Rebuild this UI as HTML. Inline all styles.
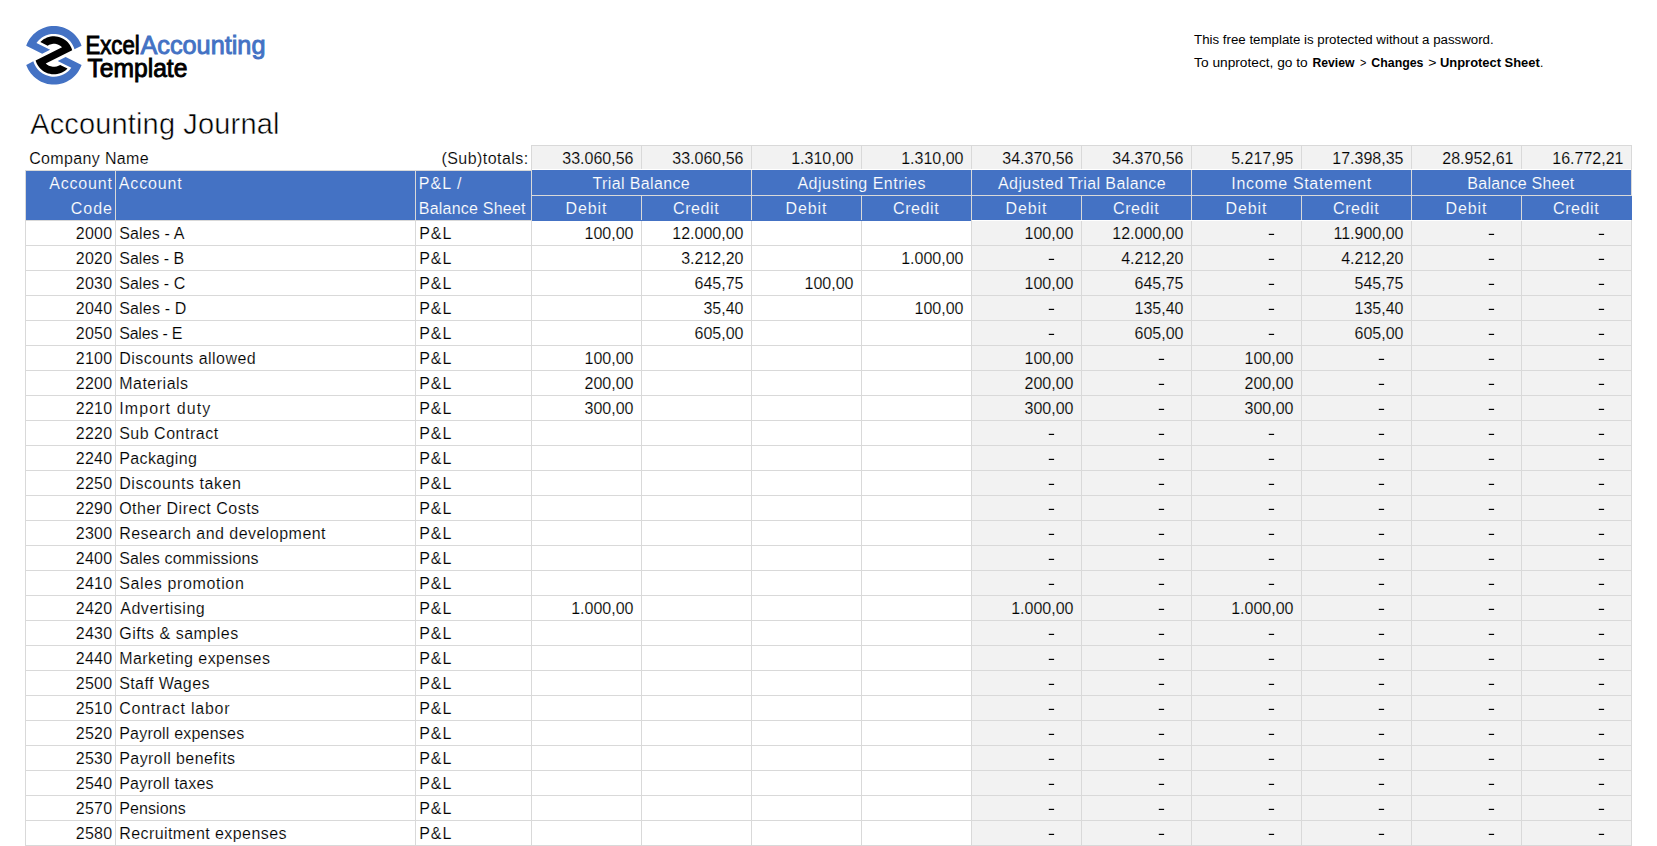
<!DOCTYPE html>
<html><head><meta charset="utf-8"><title>Accounting Journal</title>
<style>
html,body{margin:0;padding:0;background:#fff;}
body{width:1657px;height:846px;overflow:hidden;position:relative;font-family:"Liberation Sans",sans-serif;}
svg{position:absolute;left:0;top:0;display:block;}
</style></head><body>
<svg width="1657" height="846" viewBox="0 0 1657 846" shape-rendering="crispEdges">
<rect x="971" y="220" width="661" height="626" fill="#F2F2F2"/>
<rect x="531" y="145" width="1101" height="25" fill="#F2F2F2"/>
<rect x="25" y="220" width="1607" height="1" fill="#D9D9D9"/>
<rect x="25" y="245" width="1607" height="1" fill="#D9D9D9"/>
<rect x="25" y="270" width="1607" height="1" fill="#D9D9D9"/>
<rect x="25" y="295" width="1607" height="1" fill="#D9D9D9"/>
<rect x="25" y="320" width="1607" height="1" fill="#D9D9D9"/>
<rect x="25" y="345" width="1607" height="1" fill="#D9D9D9"/>
<rect x="25" y="370" width="1607" height="1" fill="#D9D9D9"/>
<rect x="25" y="395" width="1607" height="1" fill="#D9D9D9"/>
<rect x="25" y="420" width="1607" height="1" fill="#D9D9D9"/>
<rect x="25" y="445" width="1607" height="1" fill="#D9D9D9"/>
<rect x="25" y="470" width="1607" height="1" fill="#D9D9D9"/>
<rect x="25" y="495" width="1607" height="1" fill="#D9D9D9"/>
<rect x="25" y="520" width="1607" height="1" fill="#D9D9D9"/>
<rect x="25" y="545" width="1607" height="1" fill="#D9D9D9"/>
<rect x="25" y="570" width="1607" height="1" fill="#D9D9D9"/>
<rect x="25" y="595" width="1607" height="1" fill="#D9D9D9"/>
<rect x="25" y="620" width="1607" height="1" fill="#D9D9D9"/>
<rect x="25" y="645" width="1607" height="1" fill="#D9D9D9"/>
<rect x="25" y="670" width="1607" height="1" fill="#D9D9D9"/>
<rect x="25" y="695" width="1607" height="1" fill="#D9D9D9"/>
<rect x="25" y="720" width="1607" height="1" fill="#D9D9D9"/>
<rect x="25" y="745" width="1607" height="1" fill="#D9D9D9"/>
<rect x="25" y="770" width="1607" height="1" fill="#D9D9D9"/>
<rect x="25" y="795" width="1607" height="1" fill="#D9D9D9"/>
<rect x="25" y="820" width="1607" height="1" fill="#D9D9D9"/>
<rect x="25" y="845" width="1607" height="1" fill="#D9D9D9"/>
<rect x="25" y="220" width="1" height="626" fill="#D9D9D9"/>
<rect x="115" y="220" width="1" height="626" fill="#D9D9D9"/>
<rect x="415" y="220" width="1" height="626" fill="#D9D9D9"/>
<rect x="531" y="220" width="1" height="626" fill="#D9D9D9"/>
<rect x="641" y="220" width="1" height="626" fill="#D9D9D9"/>
<rect x="751" y="220" width="1" height="626" fill="#D9D9D9"/>
<rect x="861" y="220" width="1" height="626" fill="#D9D9D9"/>
<rect x="971" y="220" width="1" height="626" fill="#D9D9D9"/>
<rect x="1081" y="220" width="1" height="626" fill="#D9D9D9"/>
<rect x="1191" y="220" width="1" height="626" fill="#D9D9D9"/>
<rect x="1301" y="220" width="1" height="626" fill="#D9D9D9"/>
<rect x="1411" y="220" width="1" height="626" fill="#D9D9D9"/>
<rect x="1521" y="220" width="1" height="626" fill="#D9D9D9"/>
<rect x="1631" y="220" width="1" height="626" fill="#D9D9D9"/>
<rect x="531" y="145" width="1101" height="1" fill="#D9D9D9"/>
<rect x="531" y="145" width="1" height="25" fill="#D9D9D9"/>
<rect x="641" y="145" width="1" height="25" fill="#D9D9D9"/>
<rect x="751" y="145" width="1" height="25" fill="#D9D9D9"/>
<rect x="861" y="145" width="1" height="25" fill="#D9D9D9"/>
<rect x="971" y="145" width="1" height="25" fill="#D9D9D9"/>
<rect x="1081" y="145" width="1" height="25" fill="#D9D9D9"/>
<rect x="1191" y="145" width="1" height="25" fill="#D9D9D9"/>
<rect x="1301" y="145" width="1" height="25" fill="#D9D9D9"/>
<rect x="1411" y="145" width="1" height="25" fill="#D9D9D9"/>
<rect x="1521" y="145" width="1" height="25" fill="#D9D9D9"/>
<rect x="1631" y="145" width="1" height="25" fill="#D9D9D9"/>
<rect x="25" y="170" width="506" height="1" fill="#D9D9D9"/>
<rect x="25" y="171" width="506" height="49" fill="#4472C4"/>
<rect x="532" y="169" width="1099" height="1" fill="#FFFFFF"/>
<rect x="531" y="170" width="1101" height="50" fill="#4472C4"/>
<rect x="532" y="220" width="439" height="1" fill="#4472C4"/>
<rect x="972" y="220" width="659" height="1" fill="#FFFFFF"/>
<rect x="1631" y="220" width="1" height="1" fill="#D9D9D9"/>
<rect x="25" y="170" width="1" height="50" fill="#D9D9D9"/>
<rect x="115" y="170" width="1" height="50" fill="#D9D9D9"/>
<rect x="415" y="170" width="1" height="50" fill="#D9D9D9"/>
<rect x="531" y="170" width="1" height="50" fill="#D9D9D9"/>
<rect x="751" y="170" width="1" height="50" fill="#D9D9D9"/>
<rect x="971" y="170" width="1" height="50" fill="#D9D9D9"/>
<rect x="1191" y="170" width="1" height="50" fill="#D9D9D9"/>
<rect x="1411" y="170" width="1" height="50" fill="#D9D9D9"/>
<rect x="1631" y="170" width="1" height="25" fill="#D9D9D9"/>
<rect x="641" y="195" width="1" height="25" fill="#D9D9D9"/>
<rect x="861" y="195" width="1" height="25" fill="#D9D9D9"/>
<rect x="1081" y="195" width="1" height="25" fill="#D9D9D9"/>
<rect x="1301" y="195" width="1" height="25" fill="#D9D9D9"/>
<rect x="1521" y="195" width="1" height="25" fill="#D9D9D9"/>
<rect x="531" y="195" width="1100" height="1" fill="#D9D9D9"/>
<rect x="1631" y="195" width="1" height="1" fill="#D9D9D9"/>
<g shape-rendering="geometricPrecision"><rect x="1268.80" y="233.80" width="5.30" height="1.20" fill="#000"/>
<rect x="1488.80" y="233.80" width="5.30" height="1.20" fill="#000"/>
<rect x="1598.80" y="233.80" width="5.30" height="1.20" fill="#000"/>
<rect x="1048.80" y="258.80" width="5.30" height="1.20" fill="#000"/>
<rect x="1268.80" y="258.80" width="5.30" height="1.20" fill="#000"/>
<rect x="1488.80" y="258.80" width="5.30" height="1.20" fill="#000"/>
<rect x="1598.80" y="258.80" width="5.30" height="1.20" fill="#000"/>
<rect x="1268.80" y="283.80" width="5.30" height="1.20" fill="#000"/>
<rect x="1488.80" y="283.80" width="5.30" height="1.20" fill="#000"/>
<rect x="1598.80" y="283.80" width="5.30" height="1.20" fill="#000"/>
<rect x="1048.80" y="308.80" width="5.30" height="1.20" fill="#000"/>
<rect x="1268.80" y="308.80" width="5.30" height="1.20" fill="#000"/>
<rect x="1488.80" y="308.80" width="5.30" height="1.20" fill="#000"/>
<rect x="1598.80" y="308.80" width="5.30" height="1.20" fill="#000"/>
<rect x="1048.80" y="333.80" width="5.30" height="1.20" fill="#000"/>
<rect x="1268.80" y="333.80" width="5.30" height="1.20" fill="#000"/>
<rect x="1488.80" y="333.80" width="5.30" height="1.20" fill="#000"/>
<rect x="1598.80" y="333.80" width="5.30" height="1.20" fill="#000"/>
<rect x="1158.80" y="358.80" width="5.30" height="1.20" fill="#000"/>
<rect x="1378.80" y="358.80" width="5.30" height="1.20" fill="#000"/>
<rect x="1488.80" y="358.80" width="5.30" height="1.20" fill="#000"/>
<rect x="1598.80" y="358.80" width="5.30" height="1.20" fill="#000"/>
<rect x="1158.80" y="383.80" width="5.30" height="1.20" fill="#000"/>
<rect x="1378.80" y="383.80" width="5.30" height="1.20" fill="#000"/>
<rect x="1488.80" y="383.80" width="5.30" height="1.20" fill="#000"/>
<rect x="1598.80" y="383.80" width="5.30" height="1.20" fill="#000"/>
<rect x="1158.80" y="408.80" width="5.30" height="1.20" fill="#000"/>
<rect x="1378.80" y="408.80" width="5.30" height="1.20" fill="#000"/>
<rect x="1488.80" y="408.80" width="5.30" height="1.20" fill="#000"/>
<rect x="1598.80" y="408.80" width="5.30" height="1.20" fill="#000"/>
<rect x="1048.80" y="433.80" width="5.30" height="1.20" fill="#000"/>
<rect x="1158.80" y="433.80" width="5.30" height="1.20" fill="#000"/>
<rect x="1268.80" y="433.80" width="5.30" height="1.20" fill="#000"/>
<rect x="1378.80" y="433.80" width="5.30" height="1.20" fill="#000"/>
<rect x="1488.80" y="433.80" width="5.30" height="1.20" fill="#000"/>
<rect x="1598.80" y="433.80" width="5.30" height="1.20" fill="#000"/>
<rect x="1048.80" y="458.80" width="5.30" height="1.20" fill="#000"/>
<rect x="1158.80" y="458.80" width="5.30" height="1.20" fill="#000"/>
<rect x="1268.80" y="458.80" width="5.30" height="1.20" fill="#000"/>
<rect x="1378.80" y="458.80" width="5.30" height="1.20" fill="#000"/>
<rect x="1488.80" y="458.80" width="5.30" height="1.20" fill="#000"/>
<rect x="1598.80" y="458.80" width="5.30" height="1.20" fill="#000"/>
<rect x="1048.80" y="483.80" width="5.30" height="1.20" fill="#000"/>
<rect x="1158.80" y="483.80" width="5.30" height="1.20" fill="#000"/>
<rect x="1268.80" y="483.80" width="5.30" height="1.20" fill="#000"/>
<rect x="1378.80" y="483.80" width="5.30" height="1.20" fill="#000"/>
<rect x="1488.80" y="483.80" width="5.30" height="1.20" fill="#000"/>
<rect x="1598.80" y="483.80" width="5.30" height="1.20" fill="#000"/>
<rect x="1048.80" y="508.80" width="5.30" height="1.20" fill="#000"/>
<rect x="1158.80" y="508.80" width="5.30" height="1.20" fill="#000"/>
<rect x="1268.80" y="508.80" width="5.30" height="1.20" fill="#000"/>
<rect x="1378.80" y="508.80" width="5.30" height="1.20" fill="#000"/>
<rect x="1488.80" y="508.80" width="5.30" height="1.20" fill="#000"/>
<rect x="1598.80" y="508.80" width="5.30" height="1.20" fill="#000"/>
<rect x="1048.80" y="533.80" width="5.30" height="1.20" fill="#000"/>
<rect x="1158.80" y="533.80" width="5.30" height="1.20" fill="#000"/>
<rect x="1268.80" y="533.80" width="5.30" height="1.20" fill="#000"/>
<rect x="1378.80" y="533.80" width="5.30" height="1.20" fill="#000"/>
<rect x="1488.80" y="533.80" width="5.30" height="1.20" fill="#000"/>
<rect x="1598.80" y="533.80" width="5.30" height="1.20" fill="#000"/>
<rect x="1048.80" y="558.80" width="5.30" height="1.20" fill="#000"/>
<rect x="1158.80" y="558.80" width="5.30" height="1.20" fill="#000"/>
<rect x="1268.80" y="558.80" width="5.30" height="1.20" fill="#000"/>
<rect x="1378.80" y="558.80" width="5.30" height="1.20" fill="#000"/>
<rect x="1488.80" y="558.80" width="5.30" height="1.20" fill="#000"/>
<rect x="1598.80" y="558.80" width="5.30" height="1.20" fill="#000"/>
<rect x="1048.80" y="583.80" width="5.30" height="1.20" fill="#000"/>
<rect x="1158.80" y="583.80" width="5.30" height="1.20" fill="#000"/>
<rect x="1268.80" y="583.80" width="5.30" height="1.20" fill="#000"/>
<rect x="1378.80" y="583.80" width="5.30" height="1.20" fill="#000"/>
<rect x="1488.80" y="583.80" width="5.30" height="1.20" fill="#000"/>
<rect x="1598.80" y="583.80" width="5.30" height="1.20" fill="#000"/>
<rect x="1158.80" y="608.80" width="5.30" height="1.20" fill="#000"/>
<rect x="1378.80" y="608.80" width="5.30" height="1.20" fill="#000"/>
<rect x="1488.80" y="608.80" width="5.30" height="1.20" fill="#000"/>
<rect x="1598.80" y="608.80" width="5.30" height="1.20" fill="#000"/>
<rect x="1048.80" y="633.80" width="5.30" height="1.20" fill="#000"/>
<rect x="1158.80" y="633.80" width="5.30" height="1.20" fill="#000"/>
<rect x="1268.80" y="633.80" width="5.30" height="1.20" fill="#000"/>
<rect x="1378.80" y="633.80" width="5.30" height="1.20" fill="#000"/>
<rect x="1488.80" y="633.80" width="5.30" height="1.20" fill="#000"/>
<rect x="1598.80" y="633.80" width="5.30" height="1.20" fill="#000"/>
<rect x="1048.80" y="658.80" width="5.30" height="1.20" fill="#000"/>
<rect x="1158.80" y="658.80" width="5.30" height="1.20" fill="#000"/>
<rect x="1268.80" y="658.80" width="5.30" height="1.20" fill="#000"/>
<rect x="1378.80" y="658.80" width="5.30" height="1.20" fill="#000"/>
<rect x="1488.80" y="658.80" width="5.30" height="1.20" fill="#000"/>
<rect x="1598.80" y="658.80" width="5.30" height="1.20" fill="#000"/>
<rect x="1048.80" y="683.80" width="5.30" height="1.20" fill="#000"/>
<rect x="1158.80" y="683.80" width="5.30" height="1.20" fill="#000"/>
<rect x="1268.80" y="683.80" width="5.30" height="1.20" fill="#000"/>
<rect x="1378.80" y="683.80" width="5.30" height="1.20" fill="#000"/>
<rect x="1488.80" y="683.80" width="5.30" height="1.20" fill="#000"/>
<rect x="1598.80" y="683.80" width="5.30" height="1.20" fill="#000"/>
<rect x="1048.80" y="708.80" width="5.30" height="1.20" fill="#000"/>
<rect x="1158.80" y="708.80" width="5.30" height="1.20" fill="#000"/>
<rect x="1268.80" y="708.80" width="5.30" height="1.20" fill="#000"/>
<rect x="1378.80" y="708.80" width="5.30" height="1.20" fill="#000"/>
<rect x="1488.80" y="708.80" width="5.30" height="1.20" fill="#000"/>
<rect x="1598.80" y="708.80" width="5.30" height="1.20" fill="#000"/>
<rect x="1048.80" y="733.80" width="5.30" height="1.20" fill="#000"/>
<rect x="1158.80" y="733.80" width="5.30" height="1.20" fill="#000"/>
<rect x="1268.80" y="733.80" width="5.30" height="1.20" fill="#000"/>
<rect x="1378.80" y="733.80" width="5.30" height="1.20" fill="#000"/>
<rect x="1488.80" y="733.80" width="5.30" height="1.20" fill="#000"/>
<rect x="1598.80" y="733.80" width="5.30" height="1.20" fill="#000"/>
<rect x="1048.80" y="758.80" width="5.30" height="1.20" fill="#000"/>
<rect x="1158.80" y="758.80" width="5.30" height="1.20" fill="#000"/>
<rect x="1268.80" y="758.80" width="5.30" height="1.20" fill="#000"/>
<rect x="1378.80" y="758.80" width="5.30" height="1.20" fill="#000"/>
<rect x="1488.80" y="758.80" width="5.30" height="1.20" fill="#000"/>
<rect x="1598.80" y="758.80" width="5.30" height="1.20" fill="#000"/>
<rect x="1048.80" y="783.80" width="5.30" height="1.20" fill="#000"/>
<rect x="1158.80" y="783.80" width="5.30" height="1.20" fill="#000"/>
<rect x="1268.80" y="783.80" width="5.30" height="1.20" fill="#000"/>
<rect x="1378.80" y="783.80" width="5.30" height="1.20" fill="#000"/>
<rect x="1488.80" y="783.80" width="5.30" height="1.20" fill="#000"/>
<rect x="1598.80" y="783.80" width="5.30" height="1.20" fill="#000"/>
<rect x="1048.80" y="808.80" width="5.30" height="1.20" fill="#000"/>
<rect x="1158.80" y="808.80" width="5.30" height="1.20" fill="#000"/>
<rect x="1268.80" y="808.80" width="5.30" height="1.20" fill="#000"/>
<rect x="1378.80" y="808.80" width="5.30" height="1.20" fill="#000"/>
<rect x="1488.80" y="808.80" width="5.30" height="1.20" fill="#000"/>
<rect x="1598.80" y="808.80" width="5.30" height="1.20" fill="#000"/>
<rect x="1048.80" y="833.80" width="5.30" height="1.20" fill="#000"/>
<rect x="1158.80" y="833.80" width="5.30" height="1.20" fill="#000"/>
<rect x="1268.80" y="833.80" width="5.30" height="1.20" fill="#000"/>
<rect x="1378.80" y="833.80" width="5.30" height="1.20" fill="#000"/>
<rect x="1488.80" y="833.80" width="5.30" height="1.20" fill="#000"/>
<rect x="1598.80" y="833.80" width="5.30" height="1.20" fill="#000"/></g>
<g font-family="Liberation Sans, sans-serif" font-size="16">
<text x="112.70" y="189" letter-spacing="0.800" text-anchor="end" fill="#FFFFFF" stroke="#4472C4" stroke-width="0.15">Account</text>
<text x="112.90" y="214" letter-spacing="0.967" text-anchor="end" fill="#FFFFFF" stroke="#4472C4" stroke-width="0.15">Code</text>
<text x="118.80" y="189" letter-spacing="0.867" fill="#FFFFFF" stroke="#4472C4" stroke-width="0.15">Account</text>
<text x="418.80" y="189" letter-spacing="1.000" fill="#FFFFFF" stroke="#4472C4" stroke-width="0.15">P&amp;L /</text>
<text x="418.80" y="214" letter-spacing="0.217" fill="#FFFFFF" stroke="#4472C4" stroke-width="0.15">Balance Sheet</text>
<text x="641.30" y="189" letter-spacing="0.367" text-anchor="middle" fill="#FFFFFF" stroke="#4472C4" stroke-width="0.15">Trial Balance</text>
<text x="586.50" y="214" letter-spacing="0.900" text-anchor="middle" fill="#FFFFFF" stroke="#4472C4" stroke-width="0.15">Debit</text>
<text x="696.10" y="214" letter-spacing="0.580" text-anchor="middle" fill="#FFFFFF" stroke="#4472C4" stroke-width="0.15">Credit</text>
<text x="861.70" y="189" letter-spacing="0.500" text-anchor="middle" fill="#FFFFFF" stroke="#4472C4" stroke-width="0.15">Adjusting Entries</text>
<text x="806.50" y="214" letter-spacing="0.900" text-anchor="middle" fill="#FFFFFF" stroke="#4472C4" stroke-width="0.15">Debit</text>
<text x="916.10" y="214" letter-spacing="0.580" text-anchor="middle" fill="#FFFFFF" stroke="#4472C4" stroke-width="0.15">Credit</text>
<text x="1082.00" y="189" letter-spacing="0.395" text-anchor="middle" fill="#FFFFFF" stroke="#4472C4" stroke-width="0.15">Adjusted Trial Balance</text>
<text x="1026.50" y="214" letter-spacing="0.900" text-anchor="middle" fill="#FFFFFF" stroke="#4472C4" stroke-width="0.15">Debit</text>
<text x="1136.10" y="214" letter-spacing="0.580" text-anchor="middle" fill="#FFFFFF" stroke="#4472C4" stroke-width="0.15">Credit</text>
<text x="1301.60" y="189" letter-spacing="0.674" text-anchor="middle" fill="#FFFFFF" stroke="#4472C4" stroke-width="0.15">Income Statement</text>
<text x="1246.50" y="214" letter-spacing="0.900" text-anchor="middle" fill="#FFFFFF" stroke="#4472C4" stroke-width="0.15">Debit</text>
<text x="1356.10" y="214" letter-spacing="0.580" text-anchor="middle" fill="#FFFFFF" stroke="#4472C4" stroke-width="0.15">Credit</text>
<text x="1520.90" y="189" letter-spacing="0.233" text-anchor="middle" fill="#FFFFFF" stroke="#4472C4" stroke-width="0.15">Balance Sheet</text>
<text x="1466.50" y="214" letter-spacing="0.900" text-anchor="middle" fill="#FFFFFF" stroke="#4472C4" stroke-width="0.15">Debit</text>
<text x="1576.10" y="214" letter-spacing="0.580" text-anchor="middle" fill="#FFFFFF" stroke="#4472C4" stroke-width="0.15">Credit</text>
<text x="528.60" y="164" letter-spacing="0.445" text-anchor="end" stroke="#FFFFFF" stroke-width="0.15">(Sub)totals:</text>
<text x="633.50" y="164" text-anchor="end" stroke="#F2F2F2" stroke-width="0.15">33.060,56</text>
<text x="743.50" y="164" text-anchor="end" stroke="#F2F2F2" stroke-width="0.15">33.060,56</text>
<text x="853.50" y="164" text-anchor="end" stroke="#F2F2F2" stroke-width="0.15">1.310,00</text>
<text x="963.50" y="164" text-anchor="end" stroke="#F2F2F2" stroke-width="0.15">1.310,00</text>
<text x="1073.50" y="164" text-anchor="end" stroke="#F2F2F2" stroke-width="0.15">34.370,56</text>
<text x="1183.50" y="164" text-anchor="end" stroke="#F2F2F2" stroke-width="0.15">34.370,56</text>
<text x="1293.50" y="164" text-anchor="end" stroke="#F2F2F2" stroke-width="0.15">5.217,95</text>
<text x="1403.50" y="164" text-anchor="end" stroke="#F2F2F2" stroke-width="0.15">17.398,35</text>
<text x="1513.50" y="164" text-anchor="end" stroke="#F2F2F2" stroke-width="0.15">28.952,61</text>
<text x="1623.50" y="164" text-anchor="end" stroke="#F2F2F2" stroke-width="0.15">16.772,21</text>
<text x="29.20" y="164" letter-spacing="0.356" stroke="#FFFFFF" stroke-width="0.15">Company Name</text>
<text x="112.40" y="239" letter-spacing="0.250" text-anchor="end" stroke="#FFFFFF" stroke-width="0.15">2000</text>
<text x="119.20" y="239" letter-spacing="0.150" stroke="#FFFFFF" stroke-width="0.15">Sales - A</text>
<text x="419.20" y="239" letter-spacing="1.000" stroke="#FFFFFF" stroke-width="0.15">P&amp;L</text>
<text x="633.50" y="239" text-anchor="end" stroke="#FFFFFF" stroke-width="0.15">100,00</text>
<text x="743.50" y="239" text-anchor="end" stroke="#FFFFFF" stroke-width="0.15">12.000,00</text>
<text x="1073.50" y="239" text-anchor="end" stroke="#F2F2F2" stroke-width="0.15">100,00</text>
<text x="1183.50" y="239" text-anchor="end" stroke="#F2F2F2" stroke-width="0.15">12.000,00</text>
<text x="1403.50" y="239" text-anchor="end" stroke="#F2F2F2" stroke-width="0.15">11.900,00</text>
<text x="112.40" y="264" letter-spacing="0.250" text-anchor="end" stroke="#FFFFFF" stroke-width="0.15">2020</text>
<text x="119.20" y="264" letter-spacing="0.024" stroke="#FFFFFF" stroke-width="0.15">Sales - B</text>
<text x="419.20" y="264" letter-spacing="1.000" stroke="#FFFFFF" stroke-width="0.15">P&amp;L</text>
<text x="743.50" y="264" text-anchor="end" stroke="#FFFFFF" stroke-width="0.15">3.212,20</text>
<text x="963.50" y="264" text-anchor="end" stroke="#FFFFFF" stroke-width="0.15">1.000,00</text>
<text x="1183.50" y="264" text-anchor="end" stroke="#F2F2F2" stroke-width="0.15">4.212,20</text>
<text x="1403.50" y="264" text-anchor="end" stroke="#F2F2F2" stroke-width="0.15">4.212,20</text>
<text x="112.40" y="289" letter-spacing="0.250" text-anchor="end" stroke="#FFFFFF" stroke-width="0.15">2030</text>
<text x="119.20" y="289" letter-spacing="0.025" stroke="#FFFFFF" stroke-width="0.15">Sales - C</text>
<text x="419.20" y="289" letter-spacing="1.000" stroke="#FFFFFF" stroke-width="0.15">P&amp;L</text>
<text x="743.50" y="289" text-anchor="end" stroke="#FFFFFF" stroke-width="0.15">645,75</text>
<text x="853.50" y="289" text-anchor="end" stroke="#FFFFFF" stroke-width="0.15">100,00</text>
<text x="1073.50" y="289" text-anchor="end" stroke="#F2F2F2" stroke-width="0.15">100,00</text>
<text x="1183.50" y="289" text-anchor="end" stroke="#F2F2F2" stroke-width="0.15">645,75</text>
<text x="1403.50" y="289" text-anchor="end" stroke="#F2F2F2" stroke-width="0.15">545,75</text>
<text x="112.40" y="314" letter-spacing="0.250" text-anchor="end" stroke="#FFFFFF" stroke-width="0.15">2040</text>
<text x="119.20" y="314" letter-spacing="0.175" stroke="#FFFFFF" stroke-width="0.15">Sales - D</text>
<text x="419.20" y="314" letter-spacing="1.000" stroke="#FFFFFF" stroke-width="0.15">P&amp;L</text>
<text x="743.50" y="314" text-anchor="end" stroke="#FFFFFF" stroke-width="0.15">35,40</text>
<text x="963.50" y="314" text-anchor="end" stroke="#FFFFFF" stroke-width="0.15">100,00</text>
<text x="1183.50" y="314" text-anchor="end" stroke="#F2F2F2" stroke-width="0.15">135,40</text>
<text x="1403.50" y="314" text-anchor="end" stroke="#F2F2F2" stroke-width="0.15">135,40</text>
<text x="112.40" y="339" letter-spacing="0.250" text-anchor="end" stroke="#FFFFFF" stroke-width="0.15">2050</text>
<text x="119.20" y="339" letter-spacing="-0.200" stroke="#FFFFFF" stroke-width="0.15">Sales - E</text>
<text x="419.20" y="339" letter-spacing="1.000" stroke="#FFFFFF" stroke-width="0.15">P&amp;L</text>
<text x="743.50" y="339" text-anchor="end" stroke="#FFFFFF" stroke-width="0.15">605,00</text>
<text x="1183.50" y="339" text-anchor="end" stroke="#F2F2F2" stroke-width="0.15">605,00</text>
<text x="1403.50" y="339" text-anchor="end" stroke="#F2F2F2" stroke-width="0.15">605,00</text>
<text x="112.40" y="364" letter-spacing="0.250" text-anchor="end" stroke="#FFFFFF" stroke-width="0.15">2100</text>
<text x="119.20" y="364" letter-spacing="0.475" stroke="#FFFFFF" stroke-width="0.15">Discounts allowed</text>
<text x="419.20" y="364" letter-spacing="1.000" stroke="#FFFFFF" stroke-width="0.15">P&amp;L</text>
<text x="633.50" y="364" text-anchor="end" stroke="#FFFFFF" stroke-width="0.15">100,00</text>
<text x="1073.50" y="364" text-anchor="end" stroke="#F2F2F2" stroke-width="0.15">100,00</text>
<text x="1293.50" y="364" text-anchor="end" stroke="#F2F2F2" stroke-width="0.15">100,00</text>
<text x="112.40" y="389" letter-spacing="0.250" text-anchor="end" stroke="#FFFFFF" stroke-width="0.15">2200</text>
<text x="119.20" y="389" letter-spacing="0.502" stroke="#FFFFFF" stroke-width="0.15">Materials</text>
<text x="419.20" y="389" letter-spacing="1.000" stroke="#FFFFFF" stroke-width="0.15">P&amp;L</text>
<text x="633.50" y="389" text-anchor="end" stroke="#FFFFFF" stroke-width="0.15">200,00</text>
<text x="1073.50" y="389" text-anchor="end" stroke="#F2F2F2" stroke-width="0.15">200,00</text>
<text x="1293.50" y="389" text-anchor="end" stroke="#F2F2F2" stroke-width="0.15">200,00</text>
<text x="112.40" y="414" letter-spacing="0.250" text-anchor="end" stroke="#FFFFFF" stroke-width="0.15">2210</text>
<text x="119.20" y="414" letter-spacing="1.100" stroke="#FFFFFF" stroke-width="0.15">Import duty</text>
<text x="419.20" y="414" letter-spacing="1.000" stroke="#FFFFFF" stroke-width="0.15">P&amp;L</text>
<text x="633.50" y="414" text-anchor="end" stroke="#FFFFFF" stroke-width="0.15">300,00</text>
<text x="1073.50" y="414" text-anchor="end" stroke="#F2F2F2" stroke-width="0.15">300,00</text>
<text x="1293.50" y="414" text-anchor="end" stroke="#F2F2F2" stroke-width="0.15">300,00</text>
<text x="112.40" y="439" letter-spacing="0.250" text-anchor="end" stroke="#FFFFFF" stroke-width="0.15">2220</text>
<text x="119.20" y="439" letter-spacing="0.501" stroke="#FFFFFF" stroke-width="0.15">Sub Contract</text>
<text x="419.20" y="439" letter-spacing="1.000" stroke="#FFFFFF" stroke-width="0.15">P&amp;L</text>
<text x="112.40" y="464" letter-spacing="0.250" text-anchor="end" stroke="#FFFFFF" stroke-width="0.15">2240</text>
<text x="119.20" y="464" letter-spacing="0.377" stroke="#FFFFFF" stroke-width="0.15">Packaging</text>
<text x="419.20" y="464" letter-spacing="1.000" stroke="#FFFFFF" stroke-width="0.15">P&amp;L</text>
<text x="112.40" y="489" letter-spacing="0.250" text-anchor="end" stroke="#FFFFFF" stroke-width="0.15">2250</text>
<text x="119.20" y="489" letter-spacing="0.557" stroke="#FFFFFF" stroke-width="0.15">Discounts taken</text>
<text x="419.20" y="489" letter-spacing="1.000" stroke="#FFFFFF" stroke-width="0.15">P&amp;L</text>
<text x="112.40" y="514" letter-spacing="0.250" text-anchor="end" stroke="#FFFFFF" stroke-width="0.15">2290</text>
<text x="119.20" y="514" letter-spacing="0.488" stroke="#FFFFFF" stroke-width="0.15">Other Direct Costs</text>
<text x="419.20" y="514" letter-spacing="1.000" stroke="#FFFFFF" stroke-width="0.15">P&amp;L</text>
<text x="112.40" y="539" letter-spacing="0.250" text-anchor="end" stroke="#FFFFFF" stroke-width="0.15">2300</text>
<text x="119.20" y="539" letter-spacing="0.465" stroke="#FFFFFF" stroke-width="0.15">Research and development</text>
<text x="419.20" y="539" letter-spacing="1.000" stroke="#FFFFFF" stroke-width="0.15">P&amp;L</text>
<text x="112.40" y="564" letter-spacing="0.250" text-anchor="end" stroke="#FFFFFF" stroke-width="0.15">2400</text>
<text x="119.20" y="564" letter-spacing="0.149" stroke="#FFFFFF" stroke-width="0.15">Sales commissions</text>
<text x="419.20" y="564" letter-spacing="1.000" stroke="#FFFFFF" stroke-width="0.15">P&amp;L</text>
<text x="112.40" y="589" letter-spacing="0.250" text-anchor="end" stroke="#FFFFFF" stroke-width="0.15">2410</text>
<text x="119.20" y="589" letter-spacing="0.643" stroke="#FFFFFF" stroke-width="0.15">Sales promotion</text>
<text x="419.20" y="589" letter-spacing="1.000" stroke="#FFFFFF" stroke-width="0.15">P&amp;L</text>
<text x="112.40" y="614" letter-spacing="0.250" text-anchor="end" stroke="#FFFFFF" stroke-width="0.15">2420</text>
<text x="120.20" y="614" letter-spacing="0.540" stroke="#FFFFFF" stroke-width="0.15">Advertising</text>
<text x="419.20" y="614" letter-spacing="1.000" stroke="#FFFFFF" stroke-width="0.15">P&amp;L</text>
<text x="633.50" y="614" text-anchor="end" stroke="#FFFFFF" stroke-width="0.15">1.000,00</text>
<text x="1073.50" y="614" text-anchor="end" stroke="#F2F2F2" stroke-width="0.15">1.000,00</text>
<text x="1293.50" y="614" text-anchor="end" stroke="#F2F2F2" stroke-width="0.15">1.000,00</text>
<text x="112.40" y="639" letter-spacing="0.250" text-anchor="end" stroke="#FFFFFF" stroke-width="0.15">2430</text>
<text x="119.20" y="639" letter-spacing="0.499" stroke="#FFFFFF" stroke-width="0.15">Gifts &amp; samples</text>
<text x="419.20" y="639" letter-spacing="1.000" stroke="#FFFFFF" stroke-width="0.15">P&amp;L</text>
<text x="112.40" y="664" letter-spacing="0.250" text-anchor="end" stroke="#FFFFFF" stroke-width="0.15">2440</text>
<text x="119.20" y="664" letter-spacing="0.442" stroke="#FFFFFF" stroke-width="0.15">Marketing expenses</text>
<text x="419.20" y="664" letter-spacing="1.000" stroke="#FFFFFF" stroke-width="0.15">P&amp;L</text>
<text x="112.40" y="689" letter-spacing="0.250" text-anchor="end" stroke="#FFFFFF" stroke-width="0.15">2500</text>
<text x="119.20" y="689" letter-spacing="0.400" stroke="#FFFFFF" stroke-width="0.15">Staff Wages</text>
<text x="419.20" y="689" letter-spacing="1.000" stroke="#FFFFFF" stroke-width="0.15">P&amp;L</text>
<text x="112.40" y="714" letter-spacing="0.250" text-anchor="end" stroke="#FFFFFF" stroke-width="0.15">2510</text>
<text x="119.20" y="714" letter-spacing="0.761" stroke="#FFFFFF" stroke-width="0.15">Contract labor</text>
<text x="419.20" y="714" letter-spacing="1.000" stroke="#FFFFFF" stroke-width="0.15">P&amp;L</text>
<text x="112.40" y="739" letter-spacing="0.250" text-anchor="end" stroke="#FFFFFF" stroke-width="0.15">2520</text>
<text x="119.20" y="739" letter-spacing="0.207" stroke="#FFFFFF" stroke-width="0.15">Payroll expenses</text>
<text x="419.20" y="739" letter-spacing="1.000" stroke="#FFFFFF" stroke-width="0.15">P&amp;L</text>
<text x="112.40" y="764" letter-spacing="0.250" text-anchor="end" stroke="#FFFFFF" stroke-width="0.15">2530</text>
<text x="119.20" y="764" letter-spacing="0.434" stroke="#FFFFFF" stroke-width="0.15">Payroll benefits</text>
<text x="419.20" y="764" letter-spacing="1.000" stroke="#FFFFFF" stroke-width="0.15">P&amp;L</text>
<text x="112.40" y="789" letter-spacing="0.250" text-anchor="end" stroke="#FFFFFF" stroke-width="0.15">2540</text>
<text x="119.20" y="789" letter-spacing="0.233" stroke="#FFFFFF" stroke-width="0.15">Payroll taxes</text>
<text x="419.20" y="789" letter-spacing="1.000" stroke="#FFFFFF" stroke-width="0.15">P&amp;L</text>
<text x="112.40" y="814" letter-spacing="0.250" text-anchor="end" stroke="#FFFFFF" stroke-width="0.15">2570</text>
<text x="119.20" y="814" letter-spacing="0.100" stroke="#FFFFFF" stroke-width="0.15">Pensions</text>
<text x="419.20" y="814" letter-spacing="1.000" stroke="#FFFFFF" stroke-width="0.15">P&amp;L</text>
<text x="112.40" y="839" letter-spacing="0.250" text-anchor="end" stroke="#FFFFFF" stroke-width="0.15">2580</text>
<text x="119.20" y="839" letter-spacing="0.426" stroke="#FFFFFF" stroke-width="0.15">Recruitment expenses</text>
<text x="419.20" y="839" letter-spacing="1.000" stroke="#FFFFFF" stroke-width="0.15">P&amp;L</text>
</g>
<g font-family="Liberation Sans, sans-serif" shape-rendering="geometricPrecision">
<text x="30.20" y="134" font-size="29" textLength="249.20" lengthAdjust="spacing" stroke="#fff" stroke-width="0.5">Accounting Journal</text>
<text x="1194.10" y="44" font-size="12" textLength="299.60" lengthAdjust="spacingAndGlyphs">This free template is protected without a password.</text>
<text x="1194.10" y="67" font-size="12" textLength="113.60" lengthAdjust="spacingAndGlyphs">To unprotect, go to</text>
<text x="1312.40" y="67" font-size="12" font-weight="bold" textLength="42.00" lengthAdjust="spacingAndGlyphs">Review</text>
<text x="1359.90" y="67" font-size="12" textLength="6.40" lengthAdjust="spacingAndGlyphs">&gt;</text>
<text x="1371.30" y="67" font-size="12" font-weight="bold" textLength="52.20" lengthAdjust="spacingAndGlyphs">Changes</text>
<text x="1428.20" y="67" font-size="12" textLength="8.20" lengthAdjust="spacingAndGlyphs">&gt;</text>
<text x="1440.00" y="67" font-size="12" font-weight="bold" textLength="99.80" lengthAdjust="spacingAndGlyphs">Unprotect Sheet</text>
<text x="1540.00" y="67" font-size="12">.</text>
<text x="85.50" y="53.6" font-size="25" font-weight="normal" fill="#000" stroke="#000" stroke-width="0.9" textLength="54.20" lengthAdjust="spacingAndGlyphs">Excel</text>
<text x="140.40" y="53.6" font-size="25" font-weight="normal" fill="#4472C4" stroke="#4472C4" stroke-width="0.9" textLength="125.10" lengthAdjust="spacingAndGlyphs">Accounting</text>
<text x="87.50" y="76.6" font-size="25" font-weight="normal" fill="#000" stroke="#000" stroke-width="0.9" textLength="99.90" lengthAdjust="spacingAndGlyphs">Template</text>
</g>
<g shape-rendering="geometricPrecision"><path fill="#4472C4" fill-rule="evenodd" d="M81.59 45.71 L80.61 43.26 L79.57 41.17 L78.46 39.32 L77.11 37.42 L75.73 35.76 L74.10 34.08 L72.35 32.54 L70.62 31.24 L68.81 30.08 L66.75 28.97 L64.61 28.03 L62.58 27.31 L60.32 26.71 L58.20 26.32 L56.06 26.08 L53.72 26.00 L51.57 26.09 L49.25 26.37 L46.96 26.83 L44.88 27.42 L42.85 28.16 L40.73 29.13 L38.68 30.26 L36.88 31.45 L35.04 32.88 L33.44 34.33 L31.95 35.89 L30.47 37.70 L29.15 39.62 L28.06 41.49 L27.04 43.59 L26.21 45.71 L42.15 53.67 L50.10 49.70 L36.47 42.88 L38.04 40.93 L39.82 39.18 L41.90 37.58 L44.04 36.30 L46.32 35.29 L48.70 34.54 L51.15 34.08 L53.77 33.90 L55.61 33.97 L57.30 34.17 L58.97 34.51 L60.61 34.98 L62.21 35.58 L63.76 36.30 L65.24 37.15 L66.65 38.11 L67.98 39.18 L69.22 40.35 L70.36 41.62 L71.47 43.09 L72.39 44.52 L73.19 46.03 L73.87 47.60 L74.44 49.28Z M26.21 64.89 L27.19 67.34 L28.23 69.43 L29.34 71.28 L30.69 73.18 L32.07 74.84 L33.70 76.52 L35.45 78.06 L37.18 79.36 L38.99 80.52 L41.05 81.63 L43.19 82.57 L45.22 83.29 L47.48 83.89 L49.60 84.28 L51.74 84.52 L54.08 84.60 L56.23 84.51 L58.55 84.23 L60.84 83.77 L62.92 83.18 L64.95 82.44 L67.07 81.47 L69.12 80.34 L70.92 79.15 L72.76 77.72 L74.36 76.27 L75.85 74.71 L77.33 72.90 L78.65 70.98 L79.74 69.11 L80.76 67.01 L81.59 64.89 L65.65 56.92 L57.70 60.90 L71.33 67.72 L69.76 69.67 L67.98 71.42 L65.90 73.02 L63.76 74.30 L61.48 75.31 L59.10 76.06 L56.65 76.52 L54.03 76.70 L52.19 76.63 L50.50 76.43 L48.83 76.09 L47.19 75.62 L45.59 75.02 L44.04 74.30 L42.56 73.45 L41.15 72.49 L39.82 71.42 L38.58 70.25 L37.44 68.98 L36.33 67.51 L35.41 66.08 L34.61 64.57 L33.93 63.00 L33.36 61.32Z"/><path fill="#000" fill-rule="evenodd" d="M70.82 46.65 L69.89 45.04 L68.81 43.52 L67.58 42.11 L66.22 40.84 L64.74 39.70 L63.16 38.71 L61.49 37.88 L59.75 37.22 L57.95 36.74 L56.11 36.43 L54.25 36.30 L52.39 36.36 L50.54 36.60 L48.72 37.02 L46.95 37.62 L45.25 38.38 L43.93 39.12 L42.68 39.97 L41.49 40.91 L40.32 42.01 L47.63 45.66 L49.30 44.76 L51.17 44.13 L53.12 43.83 L55.10 43.86 L57.04 44.24 L58.88 44.93 L60.58 45.94 L62.04 47.18 L35.60 60.40 L36.22 62.25 L36.98 63.95 L37.91 65.56 L38.99 67.08 L40.22 68.49 L41.58 69.76 L43.06 70.90 L44.64 71.89 L46.31 72.72 L48.05 73.38 L49.85 73.86 L51.69 74.17 L53.55 74.30 L55.41 74.24 L57.26 74.00 L59.08 73.58 L60.85 72.98 L62.55 72.22 L63.87 71.48 L65.12 70.63 L66.31 69.69 L67.48 68.59 L60.17 64.94 L58.50 65.84 L56.63 66.47 L54.68 66.77 L52.70 66.74 L50.76 66.36 L48.92 65.67 L47.22 64.66 L45.76 63.42 L72.20 50.20 L71.58 48.35Z"/></g>
</svg>
</body></html>
